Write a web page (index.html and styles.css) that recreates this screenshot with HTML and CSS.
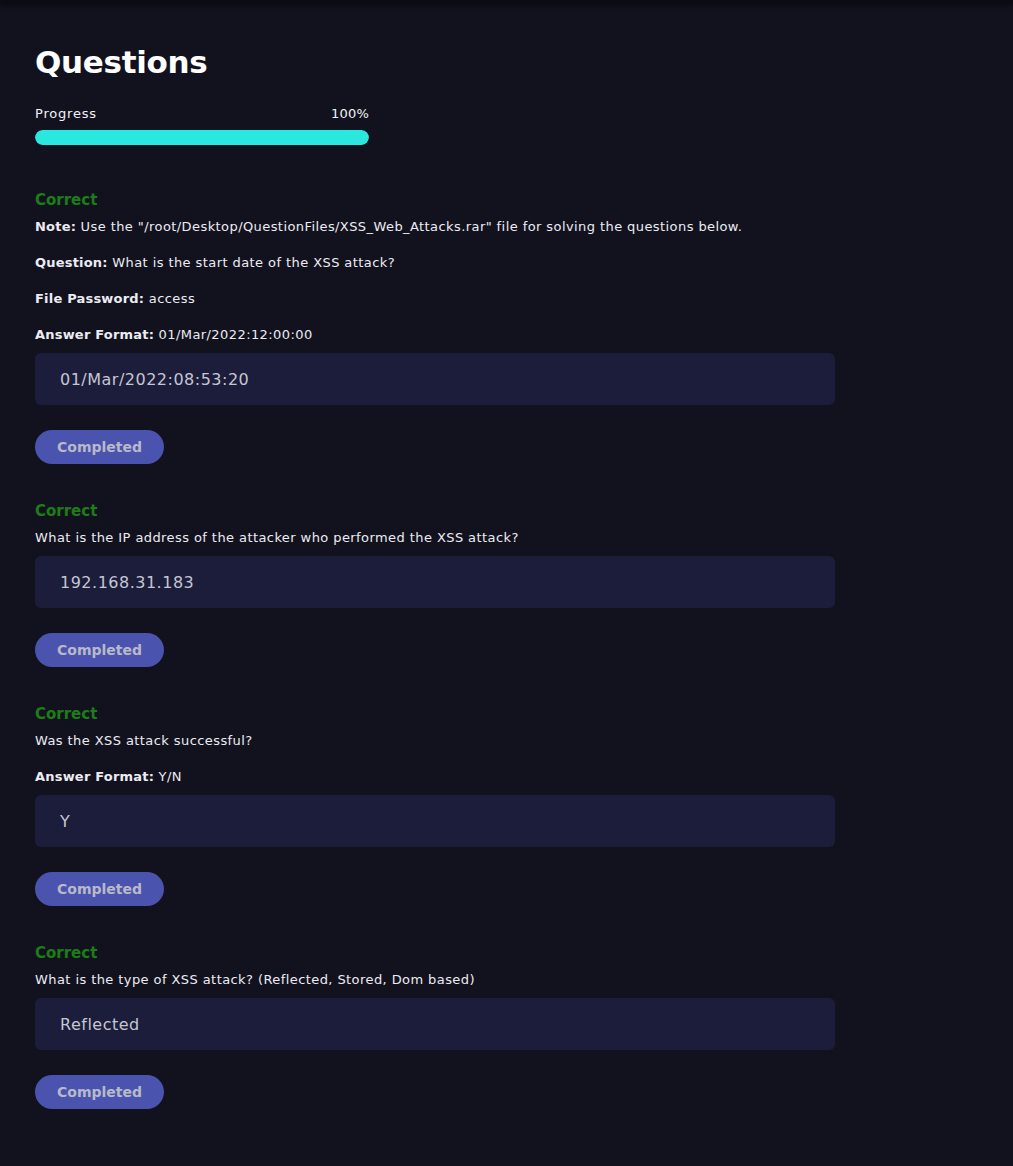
FILE: index.html
```html
<!DOCTYPE html>
<html lang="en">
<head>
<meta charset="utf-8">
<title>Questions</title>
<link rel="stylesheet" href="styles.css">
</head>
<body>
<div class="topbar"></div>
<main class="content">
  <h1 class="title">Questions</h1>
  <div class="progress">
    <div class="progress-labels"><span>Progress</span><span>100%</span></div>
    <div class="progress-track"><div class="progress-fill" style="width:100%"></div></div>
  </div>

  <section class="question">
    <div class="status">Correct</div>
    <p class="q-text"><b>Note:</b> Use the "/root/Desktop/QuestionFiles/XSS_Web_Attacks.rar" file for solving the questions below.</p>
    <p class="q-text"><b>Question:</b> What is the start date of the XSS attack?</p>
    <p class="q-text"><b>File Password:</b> access</p>
    <p class="q-text"><b>Answer Format:</b> 01/Mar/2022:12:00:00</p>
    <div class="answer">01/Mar/2022:08:53:20</div>
    <button class="btn">Completed</button>
  </section>

  <section class="question">
    <div class="status">Correct</div>
    <p class="q-text">What is the IP address of the attacker who performed the XSS attack?</p>
    <div class="answer">192.168.31.183</div>
    <button class="btn">Completed</button>
  </section>

  <section class="question">
    <div class="status">Correct</div>
    <p class="q-text">Was the XSS attack successful?</p>
    <p class="q-text"><b>Answer Format:</b> Y/N</p>
    <div class="answer">Y</div>
    <button class="btn">Completed</button>
  </section>

  <section class="question">
    <div class="status">Correct</div>
    <p class="q-text">What is the type of XSS attack? (Reflected, Stored, Dom based)</p>
    <div class="answer">Reflected</div>
    <button class="btn">Completed</button>
  </section>
</main>
</body>
</html>
```

FILE: styles.css
```css
* { box-sizing: border-box; }
html, body {
  margin: 0;
  background: #12121f;
  color: #ececf2;
  font-family: "DejaVu Sans", "Open Sans", sans-serif;
}
.topbar {
  height: 4px;
  background: #0b0b14;
  box-shadow: 0 2px 4px rgba(0, 0, 0, 0.45);
}
.content {
  padding: 36px 35px 40px;
}
.title {
  margin: 0;
  font-size: 31px;
  line-height: 44px;
  font-weight: 700;
  color: #ffffff;
  letter-spacing: -0.3px;
}
.progress {
  width: 334px;
  margin-top: 21px;
}
.progress-labels {
  display: flex;
  justify-content: space-between;
  font-size: 13px;
  line-height: 18px;
  font-weight: 400;
  color: #f2f2f6;
  letter-spacing: 0.8px;
}
.progress-labels span:last-child { letter-spacing: 0.2px; }
.progress-track {
  margin-top: 7px;
  height: 15px;
  border-radius: 8px;
  background: #2a2a44;
  overflow: hidden;
}
.progress-fill {
  height: 100%;
  background: #2be8de;
  border-radius: 8px;
}
.question {
  margin-top: 36px;
}
.question:first-of-type { margin-top: 44px; }
.status {
  font-size: 15px;
  line-height: 22px;
  font-weight: 700;
  color: #1d7d17;
}
.q-text {
  margin: 16px 0 0;
  font-size: 13px;
  line-height: 20px;
  color: #ececf2;
  letter-spacing: 0.42px;
}
.status + .q-text { margin-top: 6px; }
.q-text b { font-weight: 700; letter-spacing: 0.2px; }
.answer {
  margin-top: 8px;
  width: 800px;
  height: 52px;
  border-radius: 6px;
  background: #1b1d3b;
  padding: 0 25px;
  display: flex;
  align-items: center;
  font-size: 16px;
  color: #c6c6d2;
  letter-spacing: 0.5px;
}
.btn {
  display: block;
  margin-top: 25px;
  width: 129px;
  height: 34px;
  border: none;
  border-radius: 17px;
  background: #4a53ad;
  color: #b9b9c9;
  font-family: inherit;
  font-size: 14px;
  font-weight: 700;
  padding: 0;
}
```
